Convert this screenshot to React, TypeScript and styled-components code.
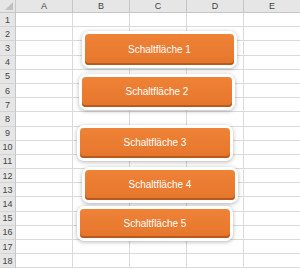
import React from "react";
import styled, {createGlobalStyle} from "styled-components";

const GlobalStyle = createGlobalStyle`
  html, body {
    margin: 0;
    padding: 0;
    background: #fff;
    overflow: hidden;
  }
`;

const columns = ["A", "B", "C", "D", "E"];
const rowCount = 18;

// where each shape sits on the sheet (orange face, in px)
const shapes = [
    {label: "Schaltfläche 1", x: 85, y: 34, w: 149, h: 31},
    {label: "Schaltfläche 2", x: 82, y: 77, w: 150, h: 30},
    {label: "Schaltfläche 3", x: 80, y: 128, w: 150, h: 30},
    {label: "Schaltfläche 4", x: 85, y: 170, w: 150, h: 30},
    {label: "Schaltfläche 5", x: 80, y: 209, w: 150, h: 29},
];

const App: React.FC = () => {
    return (
        <>
            <GlobalStyle/>
            <Sheet>
                <Grid>
                    <Corner/>
                    {columns.map(c => <ColHeader key={c}>{c}</ColHeader>)}
                    {Array.from({length: rowCount}).map((_, r) => (
                        <React.Fragment key={r}>
                            <RowHeader>{r + 1}</RowHeader>
                            {columns.map(c => <Cell key={c}/>)}
                        </React.Fragment>
                    ))}
                </Grid>
                {shapes.map(s => (
                    <ShapeButton key={s.label} $x={s.x} $y={s.y} $w={s.w} $h={s.h}>
                        {s.label}
                    </ShapeButton>
                ))}
            </Sheet>
        </>
    );
};

export default App;

const Sheet = styled.div`
  position: relative;
  width: 300px;
  height: 270px;
  overflow: hidden;
  font-family: "Liberation Sans", Arial, sans-serif;
`;

const Grid = styled.div`
  display: grid;
  grid-template-columns: 16px repeat(5, 57px);
  grid-template-rows: 13px repeat(${rowCount}, 14.2px);
`;

const Corner = styled.div`
  position: relative;
  background: #e6e6e6;
  border-right: 1px solid #c6c6c6;
  border-bottom: 1px solid #c6c6c6;
  box-sizing: border-box;

  &::after {
    content: "";
    position: absolute;
    right: 2px;
    bottom: 2px;
    width: 0;
    height: 0;
    border-left: 8px solid transparent;
    border-bottom: 8px solid #c0c0c0;
  }
`;

const ColHeader = styled.div`
  background: #e6e6e6;
  border-right: 1px solid #c6c6c6;
  border-bottom: 1px solid #c6c6c6;
  box-sizing: border-box;
  display: flex;
  align-items: center;
  justify-content: center;
  font-size: 9px;
  color: #444;
`;

const RowHeader = styled.div`
  background: #e6e6e6;
  border-right: 1px solid #c6c6c6;
  border-bottom: 1px solid #d4d4d4;
  box-sizing: border-box;
  display: flex;
  align-items: center;
  justify-content: center;
  font-size: 9px;
  color: #444;
`;

const Cell = styled.div`
  border-right: 1px solid #dadada;
  border-bottom: 1px solid #dadada;
  box-sizing: border-box;
`;

const ShapeButton = styled.div<{ $x: number; $y: number; $w: number; $h: number }>`
  position: absolute;
  left: ${({$x}) => $x}px;
  top: ${({$y}) => $y}px;
  width: ${({$w}) => $w}px;
  height: ${({$h}) => $h}px;
  box-sizing: border-box;
  display: flex;
  align-items: center;
  justify-content: center;
  background: linear-gradient(to bottom, #ee8236, #e97a2f 70%, #e2762c);
  border-radius: 4px;
  box-shadow: inset 0 -2px 0 #b95a1c,
  0 0 0 3px #fff,
  0 1px 4px 3px rgba(0, 0, 0, 0.3);
  color: #fff;
  font-size: 10px;
  padding-bottom: 1px;
`;
